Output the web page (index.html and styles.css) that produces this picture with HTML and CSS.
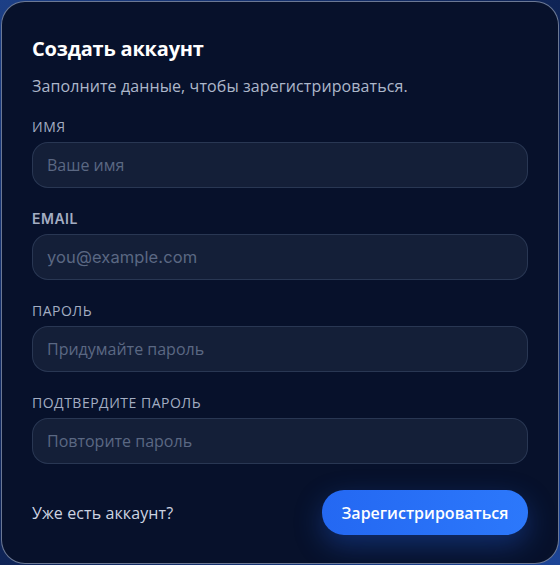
FILE: index.html
```html
<!DOCTYPE html>
<html lang="ru">
<head>
<meta charset="utf-8">
<title>Создать аккаунт</title>
<link rel="stylesheet" href="styles.css">
</head>
<body>
<form class="card">
  <h1 class="title">Создать аккаунт</h1>
  <p class="subtitle">Заполните данные, чтобы зарегистрироваться.</p>
  <div class="fields">
    <label class="field">
      <span class="label">Имя</span>
      <input class="input" type="text" placeholder="Ваше имя">
    </label>
    <label class="field">
      <span class="label label-latin">Email</span>
      <input class="input input-latin" type="email" placeholder="you@example.com">
    </label>
    <label class="field">
      <span class="label">Пароль</span>
      <input class="input" type="password" placeholder="Придумайте пароль">
    </label>
    <label class="field">
      <span class="label">Подтвердите пароль</span>
      <input class="input" type="password" placeholder="Повторите пароль">
    </label>
  </div>
  <div class="footer">
    <a class="link" href="#">Уже есть аккаунт?</a>
    <button class="button" type="button">Зарегистрироваться</button>
  </div>
</form>
</body>
</html>
```
FILE: styles.css
```css
* { box-sizing: border-box; }
html, body { height: 100%; }
body {
  margin: 0;
  padding: 1px;
  background: linear-gradient(135deg, #1c3f86 0%, #0f2456 50%, #1d4597 100%);
  font-family: "Open Sans", "Noto Sans", sans-serif;
}
.card {
  height: 563px;
  border: 1px solid rgba(190, 205, 235, 0.55);
  border-radius: 24px;
  background: #07112b;
  padding: 34px 30px 28px;
  display: flex;
  flex-direction: column;
}
.title {
  margin: 0;
  font-size: 20px;
  line-height: 26px;
  font-weight: 700;
  color: #ffffff;
  letter-spacing: -0.2px;
}
.subtitle {
  margin: 13px 0 0;
  font-size: 16px;
  line-height: 22px;
  color: #adb7ca;
  letter-spacing: 0.1px;
}
.fields {
  display: flex;
  flex-direction: column;
  gap: 22px;
  margin-top: 21px;
}
.field {
  display: flex;
  flex-direction: column;
  gap: 6px;
}
.label {
  font-size: 14px;
  line-height: 18px;
  text-transform: uppercase;
  color: #a3adc2;
  letter-spacing: 0.5px;
}
.label-latin {
  font-family: Inter, sans-serif;
  font-weight: 600;
  letter-spacing: 0.5px;
}
.input {
  height: 46px;
  width: 100%;
  border: 1px solid rgba(120, 140, 180, 0.22);
  border-radius: 16px;
  background: #141f38;
  padding: 0 14px;
  font-family: inherit;
  font-size: 16px;
  color: #e6ebf5;
  outline: none;
}
.input::placeholder {
  color: #5b6883;
  opacity: 1;
}
.input-latin {
  font-family: Inter, sans-serif;
  font-size: 16.5px;
  letter-spacing: 0.1px;
}
.footer {
  margin-top: 26px;
  display: flex;
  align-items: center;
  justify-content: space-between;
}
.link {
  font-size: 16px;
  color: #cdd4e2;
  text-decoration: none;
  letter-spacing: 0.1px;
}
.button {
  height: 45px;
  width: 206px;
  border: none;
  border-radius: 22px;
  background: linear-gradient(90deg, #2468f2, #2c78fb);
  color: #ffffff;
  font-family: inherit;
  font-size: 16px;
  font-weight: 600;
  letter-spacing: 0;
  box-shadow: 0 10px 28px rgba(37, 99, 235, 0.35);
  cursor: pointer;
}
```
